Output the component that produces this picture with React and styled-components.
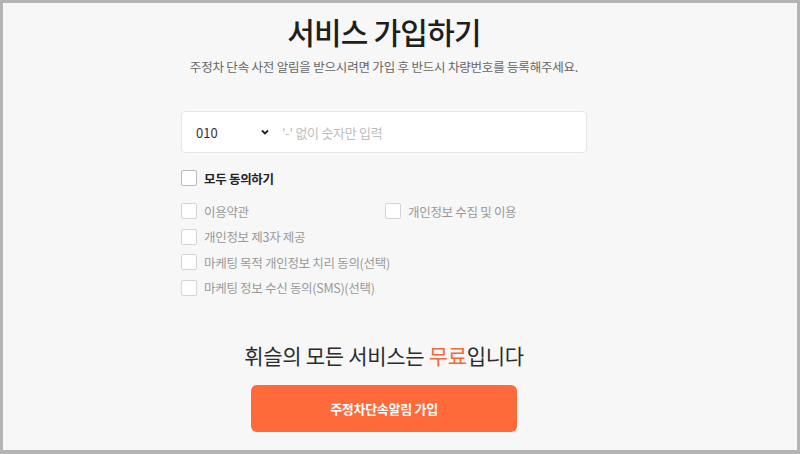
import React from 'react'
import styled, { createGlobalStyle } from 'styled-components'

const Global = createGlobalStyle`
  html, body { margin: 0; padding: 0; background: #b4b4b4; }
  body { font-family: "Noto Sans CJK KR", "Noto Sans", sans-serif; }
`

const Frame = styled.div`
  width: 800px;
  height: 454px;
  box-sizing: border-box;
  padding: 3px 3px 4px 3px;
  background: #b4b4b4;
`

const Page = styled.div`
  height: 100%;
  box-sizing: border-box;
  padding-right: 32px;
  background: #f7f7f7;
  display: flex;
  flex-direction: column;
  align-items: center;
  overflow: hidden;
`

const Title = styled.h1`
  margin: 8px 0 0;
  font-size: 30px;
  font-weight: 500;
  color: #1e1e1e;
  letter-spacing: -0.8px;
  line-height: 40px;
`

const Sub = styled.p`
  margin: 6px 0 0;
  font-size: 12.5px;
  color: #666;
  letter-spacing: -0.2px;
  line-height: 20px;
`

const Form = styled.div`
  width: 406px;
  margin-top: 34px;
  display: flex;
  flex-direction: column;
`

const PhoneBox = styled.div`
  height: 42px;
  box-sizing: border-box;
  background: #fff;
  border: 1px solid #e6e6e6;
  border-radius: 4px;
  display: flex;
  align-items: center;
  padding-left: 14px;
`

const Prefix = styled.div`
  width: 86px;
  display: flex;
  align-items: center;
  justify-content: space-between;
  font-size: 13px;
  color: #333;
  padding-right: 12px;
  box-sizing: border-box;
`

const Placeholder = styled.span`
  font-size: 13px;
  color: #bdbdbd;
  letter-spacing: -0.3px;
`

const Check = styled.span`
  width: 16px;
  height: 16px;
  box-sizing: border-box;
  border: 1px solid ${p => (p.$strong ? '#bbb' : '#d4d4d4')};
  background: #fff;
  border-radius: 2px;
  flex-shrink: 0;
`

const Item = styled.label`
  display: flex;
  align-items: center;
  gap: 7px;
  height: 16px;
  white-space: nowrap;
  font-size: 12.5px;
  letter-spacing: -0.3px;
  color: ${p => (p.$strong ? '#222' : '#999')};
  font-weight: ${p => (p.$strong ? 700 : 400)};
`

const AllRow = styled.div`
  margin-top: 17px;
`

const Grid = styled.div`
  margin-top: 17px;
  display: grid;
  grid-template-columns: 204px 1fr;
  row-gap: 9.5px;
`

const Free = styled.p`
  margin: 44px 0 0;
  font-size: 21px;
  color: #2b2b2b;
  letter-spacing: -0.3px;
  line-height: 30px;
  & em {
    font-style: normal;
    color: #f0693a;
  }
`

const Button = styled.button`
  margin-top: 15px;
  width: 266px;
  height: 47px;
  border: none;
  border-radius: 6px;
  background: #ff6a3b;
  color: #fff;
  font-family: inherit;
  font-size: 13px;
  font-weight: 700;
  letter-spacing: -0.3px;
  cursor: pointer;
`

const Chevron = () => (
  <svg width="10" height="10" viewBox="0 0 10 10">
    <path d="M2 3.5 L5 6.5 L8 3.5" fill="none" stroke="#222" strokeWidth="1.8" />
  </svg>
)

const items = [
  ['이용약관', '개인정보 수집 및 이용'],
  ['개인정보 제3자 제공'],
  ['마케팅 목적 개인정보 치리 동의(선택)'],
  ['마케팅 정보 수신 동의(SMS)(선택)'],
]

export default function App() {
  return (
    <Frame>
      <Global />
      <Page>
        <Title>서비스 가입하기</Title>
        <Sub>주정차 단속 사전 알림을 받으시려면 가입 후 반드시 차량번호를 등록해주세요.</Sub>
        <Form>
          <PhoneBox>
            <Prefix>010 <Chevron /></Prefix>
            <Placeholder>'-' 없이 숫자만 입력</Placeholder>
          </PhoneBox>
          <AllRow>
            <Item $strong><Check $strong />모두 동의하기</Item>
          </AllRow>
          <Grid>
            {items.map((row, i) => (
              <React.Fragment key={i}>
                <Item><Check />{row[0]}</Item>
                {row[1] ? <Item><Check />{row[1]}</Item> : <span />}
              </React.Fragment>
            ))}
          </Grid>
        </Form>
        <Free>휘슬의 모든 서비스는 <em>무료</em>입니다</Free>
        <Button>주정차단속알림 가입</Button>
      </Page>
    </Frame>
  )
}
